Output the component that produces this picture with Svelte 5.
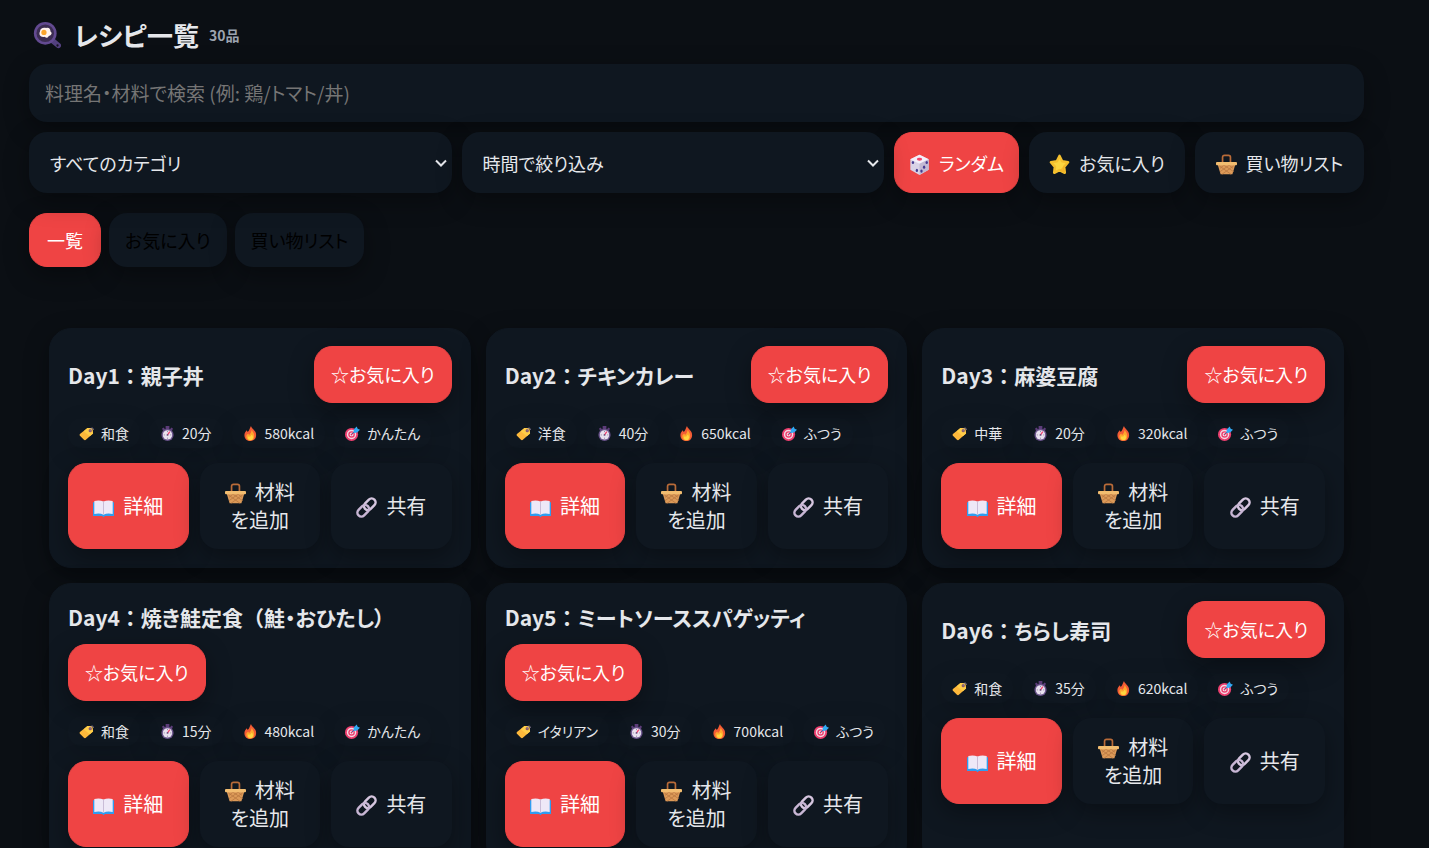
<script>
    let recipes = [
        { day: 1, title: '親子丼', category: '和食', time: 20, kcal: 580, level: 'かんたん' },
        { day: 2, title: 'チキンカレー', category: '洋食', time: 40, kcal: 650, level: 'ふつう' },
        { day: 3, title: '麻婆豆腐', category: '中華', time: 20, kcal: 320, level: 'ふつう' },
        { day: 4, title: '焼き鮭定食（鮭・おひたし）', category: '和食', time: 15, kcal: 480, level: 'かんたん' },
        { day: 5, title: 'ミートソーススパゲッティ', category: 'イタリアン', time: 30, kcal: 700, level: 'ふつう' },
        { day: 6, title: 'ちらし寿司', category: '和食', time: 35, kcal: 620, level: 'ふつう' },
    ];
    let total = 30;
    let query = $state('');
    let tab = $state('一覧');
    const tabs = ['一覧', 'お気に入り', '買い物リスト'];
    const filters = [
        { label: 'カテゴリ', options: ['すべてのカテゴリ', '和食', '洋食', '中華', 'イタリアン'] },
        { label: '時間', options: ['時間で絞り込み', '15分以内', '30分以内'] },
    ];
</script>

{#snippet icon(name)}
    <svg class="icon {name}" viewBox="0 0 32 32" aria-hidden="true">
        {#if name === 'pan'}
            <path d="M23 23l6 5" stroke="#53407f" stroke-width="6" stroke-linecap="round" />
            <circle cx="28" cy="28" r="1.3" fill="#15121f" />
            <circle cx="14" cy="14" r="13" fill="#634a91" />
            <circle cx="14" cy="14" r="10" fill="#3c2d52" />
            <path d="M8 12c0-4 4-5 7-4 3-1 5 1 5 4 3 2 0 5-2 5-1 3-4 2-5 1-4 1-7-2-5-6z" fill="#fff3ee" />
            <circle cx="12.500" cy="13" r="3" fill="#fba52c" />
        {:else if name === 'dice'}
            <path d="M16 1l14 7v16l-14 8L2 24V8z" fill="#d9d2e6" />
            <path d="M16 1l14 7-14 7L2 8z" fill="#f4effa" />
            <path d="M16 15l14-7v16l-14 8z" fill="#c2b9d3" />
            <ellipse cx="16" cy="8" rx="4" ry="2.200" fill="#f1436b" />
            <g fill="#463b91">
                <ellipse cx="6" cy="13" rx="1.800" ry="2.400" /><ellipse cx="12" cy="25" rx="1.800" ry="2.400" />
                <ellipse cx="27" cy="13" rx="1.800" ry="2.400" /><ellipse cx="23" cy="20" rx="1.800" ry="2.400" /><ellipse cx="19" cy="26" rx="1.800" ry="2.400" />
            </g>
        {:else if name === 'star'}
            <path d="M16 3l4 8 9 1.500-6 7 1 9-8-4-8 4 1-9-6-7L12 11z" fill="#fcd53f" stroke="#f5c02e" stroke-width="4" stroke-linejoin="round" />
            <path d="M24 29l-8-4 8-8 5-4-6 7z" fill="#efa91f" opacity=".6" />
        {:else if name === 'basket'}
            <path d="M10 14V5q0-3 3-3h6q3 0 3 3v9" fill="none" stroke="#b96b38" stroke-width="2.600" />
            <path d="M2 14h28l-5 17H7z" fill="#dc9a58" />
            <path d="M5 18l18 13M12 17l15 10M20 17l6 5M27 18L9 31M20 17L6 27M12 17l-6 5" stroke="#b87640" stroke-width="1.200" />
            <rect x="0" y="12" width="32" height="5" rx="1.500" fill="#f2bd70" />
        {:else if name === 'tag'}
            <path d="M18 4l10 1 2 11-16 14q-2 1-4-1l-8-8q-2-2 0-4z" fill="#fdb83b" />
            <path d="M18 4l10 1 2 11-7 6L10 11z" fill="#ffcd48" />
            <circle cx="24" cy="10" r="3.500" fill="#8b5d6c" />
            <path d="M24 10c0-7 7-7 7-2" fill="none" stroke="#8b7b98" stroke-width="2" />
        {:else if name === 'watch'}
            <path d="M12 0h8v7h-8zM4 6l4-3 3 5-3 3zM28 6l-4-3-3 5 3 3z" fill="#5c3c79" />
            <circle cx="16" cy="19" r="13" fill="#69538a" />
            <circle cx="16" cy="19" r="10" fill="#e8e1ef" />
            <path d="M16 19l5-7" stroke="#f33f6b" stroke-width="2.600" />
            <path d="M16 11v2M24 19h-2M16 27v-2M8 19h2" stroke="#665579" stroke-width="1.500" />
            <circle cx="16" cy="19" r="2" fill="#694c7b" />
        {:else if name === 'fire'}
            <path d="M17 0c2 7 11 9 11 19 0 8-5 13-12 13S3 28 3 19c0-5 3-7 5-10l2 4c4-4 4-8 7-13z" fill="#f35b35" />
            <path d="M19 8c2 6 5 7 5 14 0 6-4 9-9 9s-8-4-8-8 2-5 4-7l2 3c4-3 4-6 6-11z" fill="#ffa62d" />
            <path d="M19 18c4 6 3 12-3 12-5 0-7-5-4-8l3 1z" fill="#ffd640" />
        {:else if name === 'target'}
            <circle cx="14" cy="18" r="14" fill="#ed3f6f" />
            <circle cx="14" cy="18" r="10" fill="#f4d9e2" />
            <circle cx="14" cy="18" r="7" fill="#ed3f6f" />
            <circle cx="14" cy="18" r="4" fill="#f8e7ef" />
            <circle cx="14" cy="18" r="2" fill="#d82d60" />
            <path d="M15 17L25 7" stroke="#315b9d" stroke-width="2" />
            <path d="M18 14l1-7 6-6 2 5 5 2-6 6-7 1z" fill="#31a9f3" />
        {:else if name === 'book'}
            <path d="M0 8h15l1 1 1-1h15v21H18l-2 2-2-2H0z" fill="#2f9df0" />
            <path d="M2 6q8-2 14 1 6-3 14-1v20q-8-2-14 1-6-3-14-1z" fill="#eee8f7" />
            <path d="M16 7v20" stroke="#c8bbd6" stroke-width="1.500" />
        {:else if name === 'link'}
            <g fill="none" stroke-width="3.800">
                <rect x="-10" y="-6" width="20" height="12" rx="6" transform="translate(21 11) rotate(-45)" stroke="#d6c6df" />
                <rect x="-10" y="-6" width="20" height="12" rx="6" transform="translate(11 21) rotate(-45)" stroke="#c8b6d4" />
            </g>
        {/if}
    </svg>
{/snippet}

<header>
    <h1>{@render icon('pan')}レシピ一覧 <small>{total}品</small></h1>
    <input class="search" type="search" aria-label="検索" placeholder="料理名・材料で検索 (例: 鶏/トマト/丼)" bind:value={query}>
    <div class="toolbar">
        {#each filters as filter}
            <div class="filter">
                <select aria-label={filter.label}>
                    {#each filter.options as option}
                        <option>{option}</option>
                    {/each}
                </select>
                <svg class="arrow" viewBox="0 0 12 8" aria-hidden="true">
                    <path d="M1 1.500l5 5 5-5" fill="none" stroke="#e5e7eb" stroke-width="2" />
                </svg>
            </div>
        {/each}
        <button class="primary">{@render icon('dice')}ランダム</button>
        <button>{@render icon('star')}お気に入り</button>
        <button>{@render icon('basket')}買い物リスト</button>
    </div>
    <nav class="tabs">
        {#each tabs as name}
            <button class:primary={tab === name} onclick={() => (tab = name)}>{name}</button>
        {/each}
    </nav>
</header>

<main>
    {#each recipes as recipe}
        <article class="card">
            <div class="card-head">
                <h2>Day{recipe.day}<span class="wide">：</span>{#each recipe.title.split(/(（)/) as part}<span class:wide={part === '（'}>{part}</span>{/each}</h2>
                <button class="primary">☆お気に入り</button>
            </div>
            <div class="chips">
                <span class="chip">{@render icon('tag')}{recipe.category}</span>
                <span class="chip">{@render icon('watch')}{recipe.time}分</span>
                <span class="chip">{@render icon('fire')}{recipe.kcal}kcal</span>
                <span class="chip">{@render icon('target')}{recipe.level}</span>
            </div>
            <div class="actions">
                <button class="primary">{@render icon('book')}詳細</button>
                <button>{@render icon('basket')}材料を追加</button>
                <button>{@render icon('link')}共有</button>
            </div>
        </article>
    {/each}
</main>

<style>
    :global(body) {
        background: #0b0f14;
        color: #e5e7eb;
        font-family: "Noto Sans CJK JP", sans-serif;
        font-feature-settings: "palt";
        font-size: 18px;
        line-height: 28px;
        overflow: hidden;
    }
    header {
        padding: 15px 65px 0 29px;
    }
    h1 {
        display: flex;
        align-items: center;
        margin: 0 0 9px 4px;
        font-size: 26px;
        line-height: 40px;
        font-weight: 700;
    }
    small {
        margin-left: 10px;
        font-size: 14px;
        color: #9ca3af;
    }
    button,
    input,
    select {
        box-sizing: border-box;
        border: 1px solid transparent;
        border-radius: 18px;
        background: #0f1720;
        color: #e5e7eb;
        box-shadow: 0 8px 24px rgba(0, 0, 0, 0.35);
        font: inherit;
        font-feature-settings: inherit;
    }
    button {
        padding: 14px 16px;
        cursor: pointer;
    }
    .primary {
        background: #ef4444;
        border-color: #ef4444;
        color: #fff;
    }
    .search {
        display: block;
        width: 100%;
        padding: 14px 15px;
        font-size: 19px;
        appearance: none;
    }
    .search::placeholder {
        color: #757575;
    }
    .toolbar {
        display: grid;
        grid-template-columns: 1fr 1fr 125px 156px 169px;
        grid-auto-rows: 61px;
        gap: 10px;
        margin-top: 10px;
    }
    .toolbar button {
        padding: 0 8px;
        white-space: nowrap;
    }
    .filter {
        position: relative;
    }
    select {
        width: 100%;
        height: 100%;
        padding: 0 20px;
        appearance: none;
    }
    .arrow {
        position: absolute;
        right: 5px;
        top: 27px;
        width: 12px;
        height: 8px;
        pointer-events: none;
    }
    .tabs {
        display: flex;
        gap: 8px;
        margin-top: 20px;
    }
    .tabs button {
        min-width: 72px;
        padding: 12px 15px;
    }
    .tabs button:not(.primary) {
        color: #000;
    }
    main {
        display: grid;
        grid-template-columns: repeat(3, 1fr);
        gap: 15px;
        padding: 61px 85px 20px 49px;
    }
    .card {
        min-width: 0;
        padding: 17px 18px 18px;
        border: 1px solid #0f1720;
        border-radius: 22px;
        background: #0f1720;
        box-shadow: 0 8px 24px rgba(0, 0, 0, 0.35);
    }
    .card-head {
        display: flex;
        flex-wrap: wrap;
        align-items: center;
        justify-content: space-between;
        gap: 11px;
    }
    .card-head button {
        line-height: 27px;
    }
    h2 {
        margin: 0;
        font-size: 21px;
        line-height: 32px;
        font-weight: 600;
    }
    .wide {
        font-feature-settings: "palt" 0;
    }
    .chips {
        display: flex;
        gap: 9px;
        margin: 15px 0;
        font-size: 14px;
        white-space: nowrap;
    }
    .chip {
        display: flex;
        align-items: center;
        padding: 1px 11px;
        border-radius: 14px;
        box-shadow: 0 8px 24px rgba(0, 0, 0, 0.15);
    }
    .actions {
        display: grid;
        grid-template-columns: repeat(3, 1fr);
        gap: 11px;
    }
    .actions button {
        min-height: 86px;
        font-size: 20px;
    }
    .icon {
        width: 21px;
        height: 21px;
        margin-right: 9px;
        vertical-align: -4px;
    }
    .chip .icon {
        width: 15px;
        height: 15px;
        margin-right: 7px;
    }
    .icon.pan {
        width: 28px;
        height: 28px;
        margin-right: 13px;
    }
</style>
